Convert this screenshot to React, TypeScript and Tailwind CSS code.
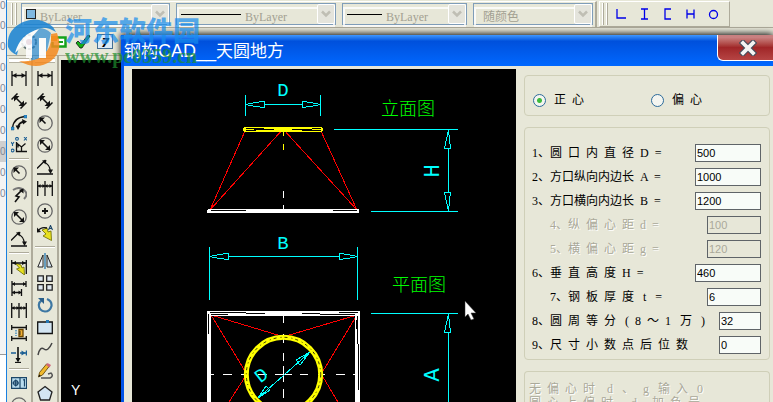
import type { ReactNode } from "react";

const ink = { fill: "none", stroke: "#111", strokeWidth: 1.3 };

const icons: Record<string, ReactNode> = {
  linear: (
    <g {...ink}>
      <path d="M1 0v15M15 0v15M1 4.500h14" />
      <path d="M1.500 4.500l4-2.500v5zM14.500 4.500l-4-2.500v5z" fill="#111" stroke="none" />
    </g>
  ),
  aligned: (
    <g {...ink}>
      <path d="M.500 6.500l6-6M9.500 15.500l6-6M3 3l10 10" strokeWidth="1.500" />
      <path d="M3 3h5.500L3 8.500zM13 13H7.500L13 7.500z" fill="#111" stroke="none" />
    </g>
  ),
  arc: (
    <g {...ink}>
      <path d="M1.500 13Q2.500 2.500 14 1.500" />
      <path d="M7 13Q7.500 7.500 13 6.500" strokeWidth="1.800" />
      <path d="M4.500 10.500h5l-2.500 4.500zM11 4l5 2.500l-4 3z" fill="#111" stroke="none" />
      <path d="M0 12h3v3H0zM13 0h3v3h-3z" fill="#2e8fd0" stroke="#145a8c" strokeWidth="0.500" />
    </g>
  ),
  ordinate: (
    <g {...ink}>
      <path d="M5.500 5v9.500H16M5.500 6l5 4 4-3.500M10.500 10v4.500M7 10.500v-3" />
      <g stroke="#1c5f94" strokeWidth="1.100">
        <path d="M0 5l1.500 2L3 5M1.500 7v2M13 0l3 3.500M16 0l-3 3.500" />
        <circle cx="6" cy="1.800" r="1.400" />
        <circle cx="1.600" cy="13.500" r="1.400" />
      </g>
    </g>
  ),
  radius: (
    <g {...ink}>
      <circle cx="8" cy="8" r="7.200" stroke="#666" />
      <path d="M3 3l5.500 5.500" strokeWidth="1.600" />
      <path d="M2.500 2.500h5.500L2.500 8z" fill="#111" stroke="none" />
    </g>
  ),
  jogged: (
    <g {...ink}>
      <path d="M2 3Q8-1 13 3t0 9" stroke="#777" strokeWidth="2" />
      <path d="M4 15l4-5-3-1 6-6" strokeWidth="1.600" />
      <path d="M12.500 1.500v5L8 3z" fill="#111" stroke="none" />
    </g>
  ),
  diameter: (
    <g {...ink}>
      <circle cx="8" cy="8" r="7.200" stroke="#666" />
      <path d="M3 3l10 10" strokeWidth="1.600" />
      <path d="M3 3h5L3 8zM13 13H8l5-5z" fill="#111" stroke="none" />
    </g>
  ),
  angular: (
    <g {...ink}>
      <path d="M0 15h16M0 9.500L8.500 1M6 2.500Q13 5 13.500 13" />
      <path d="M5 1.500l4.500-.500-1 4.500zM11 10.500h5L13.500 15z" fill="#111" stroke="none" />
    </g>
  ),
  quick: (
    <g {...ink}>
      <path d="M4 4l6 2 1 3 2-1 .500 8-8-6 3-1z" fill="#e8e020" stroke="#6a6a00" strokeWidth="0.800" />
      <path d="M.700 1v14M15.300 1v14M1 4h14" />
      <path d="M1 4l4-2v4zM15 4l-4-2v4z" fill="#111" stroke="none" />
    </g>
  ),
  baseline: (
    <g {...ink}>
      <path d="M1 0v15M15 0v6M10.500 8v7M1 3h14M1 11.500h9.500" />
      <path d="M1 3l3-2v4zM15 3l-3-2v4zM1 11.500l3-2v4zM10.500 11.500l-3-2v4z" fill="#111" stroke="none" />
    </g>
  ),
  chain: (
    <g {...ink}>
      <path d="M.700 0v15M8 0v15M15.300 0v15M1 5h14" />
      <path d="M1 5l2.500-2v4zM8 5L5.500 3v4zM8 5l2.500-2v4zM15 5l-2.500-2v4z" fill="#111" stroke="none" />
    </g>
  ),
  space: (
    <g {...ink}>
      <path d="M.700 0v5M15.300 0v5M.700 11v5M15.300 11v5M1 2.500h14M1 13.500h14" />
      <path d="M5 5v6" stroke="#2e7fb8" strokeDasharray="1.500 1" />
      <path d="M8 4.500h4v7H8z" fill="#f2b234" stroke="#6a4300" />
      <path d="M8 7h2M8 9h2" strokeWidth="0.800" />
    </g>
  ),
  breakDim: (
    <g {...ink}>
      <path d="M7 0v14" strokeWidth="1.600" />
      <path d="M4.500 11h5L7 15.500z" fill="#111" stroke="none" />
      <path d="M4 15.500h6" />
      <path d="M0 6h5M9 6h6M15.500 3.500v5" stroke="#1c5f94" strokeWidth="1.500" />
      <path d="M10.500 3.500L14.500 6l-4 2.500z" fill="#1c5f94" stroke="none" />
    </g>
  ),
  tolerance: (
    <g stroke="#1c4668" strokeWidth="1.200" fill="#b9dcee">
      <path d="M.600 2.600h15v10.800H.600zM9 2.600v10.800" />
      <circle cx="4.700" cy="8" r="2.300" fill="none" />
      <path d="M1.500 8H8M4.700 4.500v7M12 5l1.500-.500v7" />
    </g>
  ),
  center: (
    <g {...ink}>
      <circle cx="8" cy="8" r="7.200" stroke="#666" />
      <path d="M8 5v6M5 8h6" strokeWidth="1.800" />
    </g>
  ),
  edit: (
    <g {...ink}>
      <path d="M5 5l5-2 1 4 3-1 .500 9.500L6 11l3-2z" fill="#e8e020" stroke="#6a6a00" strokeWidth="0.800" />
      <path d="M1 6Q4 1.500 10 3" />
      <path d="M0 2.500V7.500l4-.500z" fill="#111" stroke="none" />
      <path d="M11.500 5l2-4.500 2 4.500M12 3.500h3" stroke="#1c4668" strokeWidth="1.100" />
    </g>
  ),
  mirror: (
    <g>
      <path d="M6 2v12H.800z" fill="#f3f7fa" stroke="#222" />
      <path d="M10 2v12h5.200z" fill="#cfe0ec" stroke="#222" />
      <path d="M8 0v16" stroke="#2477b3" strokeWidth="1.300" />
    </g>
  ),
  array: (
    <path d="M.800.800h5.500v5.500H.800zM9.700.800h5.500v5.500H9.700zM.800 9.700h5.500v5.500H.800zM9.700 9.700h5.500v5.500H9.700z" fill="#dfe9f1" stroke="#222" strokeWidth="1.300" />
  ),
  rotate: (
    <g fill="none" stroke="#3d77a3" strokeWidth="2.200">
      <path d="M10 2Q15 4 14.500 9Q13 14.500 8 14.500Q2 14 1.800 8Q2 5 4.500 3.500" />
      <path d="M1 1h6v6z" fill="#2a5f8a" stroke="none" />
    </g>
  ),
  rect: (
    <g>
      <path d="M.700 3h14.600v11.500H.700z" fill="#d3e5f2" stroke="#111" strokeWidth="1.300" />
      <path d="M9 1h3v3H9z" fill="#2477b3" />
    </g>
  ),
  spline: <path d="M1 14Q3 5 7 8T15 2" fill="none" stroke="#444" strokeWidth="1.500" />,
  pencil: (
    <g>
      <path d="M4 15h9q4-2 1-5l-3 1" fill="none" stroke="#555" strokeWidth="1.500" />
      <path d="M1.500 14l1-4.500 7-8.500 3 2-7 9z" fill="#f0b92c" stroke="#553b00" strokeWidth="0.800" />
      <path d="M9 2l1.500-2 3.500 2-1.500 2.500z" fill="#d0687a" />
      <path d="M1.500 14l.600-2.500 1.800 1.300z" fill="#111" />
    </g>
  ),
  polygon: <path d="M8 1.500l7 5.500-2.500 8h-9L1 7z" fill="#d3e5f2" stroke="#222" strokeWidth="1.300" />,
};

const dimensionTools = [
  "linear", "aligned", "arc", "ordinate", "-", "radius", "jogged", "diameter", "angular", "-",
  "quick", "baseline", "chain", "space", "breakDim", "-", "tolerance", "center",
];
const drawTools = [
  "linear", "aligned", "radius", "diameter", "angular", "chain", "center", "edit", "-",
  "mirror", "array", "rotate", "rect", "spline", "pencil", "polygon",
];

const fields = [
  { id: "D", label: "1、圆  口  内  直  径  D  =", value: "500", box: "w-[66px]" },
  { id: "A", label: "2、方口纵向内边长  A  =", value: "1000", box: "w-[66px]" },
  { id: "B", label: "3、方口横向内边长  B  =", value: "1200", box: "w-[66px]" },
  { id: "d", label: "4、纵  偏  心  距  d  =", value: "100", box: "w-[54px]", indent: true, disabled: true },
  { id: "g", label: "5、横  偏  心  距  g  =", value: "120", box: "w-[54px]", indent: true, disabled: true },
  { id: "H", label: "6、垂  直  高  度  H  =", value: "460", box: "w-[66px]" },
  { id: "t", label: "7、钢  板  厚  度   t   =", value: "6", box: "w-[54px]", indent: true },
  { id: "n", label: "8、圆  周  等  分   (  8  ～  1   万   )", value: "32", box: "w-[42px]" },
  { id: "p", label: "9、尺  寸  小  数  点  后  位  数", value: "0", box: "w-[42px]" },
];

function ToolColumn({ tools, name }: { tools: string[]; name: string }) {
  return (
    <div role="toolbar" aria-label={name} className="flex w-[26px] shrink-0 flex-col items-center border-r-2 border-r-[#aeab9b]">
      <div className="mt-0.5 mb-[5px] h-[5px] w-5 shrink-0 border-y border-[#b5b2a2] bg-white" />
      {tools.map((tool, i) =>
        tool === "-" ? (
          <div key={i} className="my-0.5 h-0.5 w-5 shrink-0 border-t border-t-[#aeab9b] border-b border-b-white" />
        ) : (
          <button key={i} type="button" aria-label={tool} className="flex h-[22px] w-[22px] shrink-0 items-center justify-center">
            <svg viewBox="0 0 16 16" className="h-4 w-4">{icons[tool]}</svg>
          </button>
        )
      )}
    </div>
  );
}

function Combo({ label, name, width, children, pad }: { label: string; name: string; width: string; children?: ReactNode; pad: string }) {
  return (
    <div className={`relative h-[22px] shrink-0 border border-[#7f9db9] bg-[#e7e7d8] ${width}`}>
      <select disabled aria-label={name} className={`h-full w-full appearance-none border-2 border-white/80 text-[12px] leading-4 text-[#a3a192] opacity-100 ${pad}`}>
        <option>{label}</option>
      </select>
      {children}
      <div className="pointer-events-none absolute top-0 right-0 flex h-5 w-[18px] items-center justify-center rounded-xs border border-white bg-[#e4e4dc]">
        <svg viewBox="0 0 10 8" className="h-2 w-2.5"><path d="M1 1.500l4 4 4-4" fill="none" stroke="#bfbeb4" strokeWidth="2.500" /></svg>
      </div>
    </div>
  );
}

function Grip() {
  return (
    <div className="flex h-[22px] shrink-0 gap-0.5">
      <div className="w-0.5 border-r border-r-[#aeab9b] bg-white" />
      <div className="w-0.5 border-r border-r-[#aeab9b] bg-white" />
    </div>
  );
}

function TopToolbars() {
  return (
    <div className="flex h-7 shrink-0 items-center overflow-hidden border-b border-b-[#aeab9b]">
      <div className="flex h-[26px] shrink-0 items-center border-t border-t-white border-r-2 border-r-[#aeab9b] pr-0.5 pl-1">
        <Grip />
        <div className="ml-1 flex items-center gap-1.5 font-['Liberation_Serif','Noto_Sans_CJK_SC',serif]">
          <Combo name="颜色" label="ByLayer" width="w-[149px]" pad="pl-4">
            <div className="absolute top-[5px] left-1 h-2.5 w-2.5 border border-[#222] bg-[#7fb8e0]" />
          </Combo>
          <Combo name="线型" label="ByLayer" width="w-[160px]" pad="pl-[66px]">
            <div className="absolute top-2.5 left-1 h-px w-[60px] bg-black" />
          </Combo>
          <Combo name="线宽" label="ByLayer" width="w-[125px]" pad="pl-[41px]">
            <div className="absolute top-2.5 left-1 h-px w-[35px] bg-black" />
          </Combo>
          <Combo name="打印样式" label="随颜色" width="w-[120px]" pad="pl-[7px]" />
        </div>
      </div>
      <div role="toolbar" aria-label="型钢" className="ml-0.5 flex h-[26px] shrink-0 items-center border border-[#aeab9b] border-t-white border-l-white pr-1 pl-0.5">
        <Grip />
        <div className="ml-0.5 flex">
          {["M3 2v9h9", "M4 2h7M7.500 2v10M4 12h7", "M11 2H5v10h6M5 5v4", "M4 2.500v9M11 2.500v9M4 7h7"].map((d) => (
            <button key={d} type="button" aria-label="截面" className="flex h-6 w-[23px] items-center justify-center">
              <svg viewBox="0 0 15 14" className="h-3.5 w-[15px]"><path d={d} fill="none" stroke="#0000e8" strokeWidth="1.300" /></svg>
            </button>
          ))}
          <button type="button" aria-label="圆管" className="flex h-6 w-[23px] items-center justify-center">
            <svg viewBox="0 0 15 14" className="h-3.5 w-[15px]"><circle cx="7.500" cy="7.500" r="4" fill="none" stroke="#0000e8" strokeWidth="1.300" /></svg>
          </button>
        </div>
      </div>
    </div>
  );
}

function StandardToolbar() {
  return (
    <div className="flex h-7 shrink-0 items-center border-b border-b-[#aeab9b] pl-3">
      <button type="button" aria-label="设置" className="h-5 w-6">
        <svg viewBox="0 0 20 20" className="h-5 w-5">
          <circle cx="10" cy="10" r="7" fill="#e8edf2" stroke="#677" strokeWidth="2" strokeDasharray="3 1.500" />
          <circle cx="10" cy="10" r="3" fill="#7b2d53" />
        </svg>
      </button>
      <button type="button" aria-label="图层" className="ml-2 h-4 w-4">
        <svg viewBox="0 0 16 16" className="h-4 w-4">
          <path d="M4 3.500h10.500v9H1.500V8" fill="#fff" stroke="#16a31b" strokeWidth="2.500" />
          <path d="M0 2h6v5H0z" fill="#e3a928" />
          <path d="M7 8h5" stroke="#16a31b" strokeWidth="2" />
        </svg>
      </button>
      <button type="button" aria-label="确定" className="ml-2 h-4 w-4">
        <svg viewBox="0 0 16 16" className="h-4 w-4"><path d="M1 9l2-2 3 3 7-9 2 1-8 12H5z" fill="#14b014" stroke="#111" strokeWidth="0.800" /></svg>
      </button>
      <button type="button" aria-label="日历" className="ml-1.5 flex h-[15px] w-4 items-center justify-center border border-[#456f94] bg-[#dceaf5] text-[13px] leading-3 font-bold text-black italic">
        7
      </button>
    </div>
  );
}

function Watermark() {
  return (
    <div className="pointer-events-none absolute top-[15px] left-[7px] flex">
      <svg viewBox="0 0 54 54" className="h-[54px] w-[54px] opacity-85">
        <path d="M1 32Q-1 15 16 7Q32 0 46 12L49 17Q36 9 27 16Q13 23 10 40Q4 38 1 32z" fill="#1782d3" />
        <path d="M24 15Q35 10 44 18L38 45Q30 49 24 44z" fill="#1782d3" fillOpacity="0.750" />
        <path d="M50 18Q57 36 44 46Q30 56 12 46Q30 48 38 38Q45 31 44 19z" fill="#f58a1f" />
        <path d="M8 38Q13 19 32 14l-7 8v21h-6V29Q14 32 8 38z" fill="#fff" />
        <path d="M32 23h7v20h-7z" fill="#fff" />
      </svg>
      <div className="pl-1 whitespace-nowrap opacity-70">
        <div className="font-['Noto_Sans_CJK_SC',sans-serif] text-[27px] leading-[30px] font-black text-[#178cec]">河东软件园</div>
        <div className="font-['Liberation_Serif',serif] text-[20px] leading-[22px] font-bold text-[#1e8f2e]">www.pc0359.cn</div>
      </div>
    </div>
  );
}

function Drawing() {
  return (
    <svg viewBox="132 69 384 333" className="h-[333px] w-[384px] shrink-0 bg-black" fill="none">
      <g stroke="#f00" shapeRendering="crispEdges">
        <path d="M245 131L210 210L283 129L357 210L321 131" />
        <path d="M211 315L281 336M211 315L245 371M245 377L229 402M357 315L286 336M357 315L323 371M323 377L338 402" />
      </g>

      <g shapeRendering="crispEdges">
        <path d="M244 127h78v5h-78zM243 128h80v3h-80z" fill="#ff0" />
        <path d="M246 128.500h18M254 129.500h20M246 130.500h10M292 129.500h20M302 130.500h19M312 128.500h9" stroke="#000" />
        <path d="M283.500 131v5M283.500 144v6" stroke="#ff0" />
        <path d="M283.500 191v7M283.500 205v5" stroke="#fff" />
        <path d="M208 209h151v4H207v-3z" fill="#fff" />
        <path d="M211 210.500h35M333 210.500h24" stroke="#000" />

        <path d="M207 402v-91h153v91h-5v-86H211v86z" fill="#fff" />
        <path d="M210 312.500h36M246 313.500h19M211 314.500h17M302 313.500h18M320 314.500h35M339 312.500h19M208.500 314v20M357.500 316v28M358.500 344v46M356.500 320v9" stroke="#000" />
        <path d="M283.500 316v7M283.500 334v9M283.500 353v8M283.500 366v16M283.500 389v9" stroke="#fff" />
        <path d="M211 374.500h3M223 374.500h9M241 374.500h6M258 374.500h9M275 374.500h17M300 374.500h8M318 374.500h7M336 374.500h9M353 374.500h3" stroke="#fff" />
      </g>

      <circle cx="283.500" cy="374.500" r="37.200" stroke="#ff0" strokeWidth="5" />
      <circle cx="283.500" cy="374.500" r="37.200" stroke="#000" strokeWidth="0.800" strokeDasharray="3 4 1 3" />

      <g stroke="#0ff" shapeRendering="crispEdges">
        <path d="M245.500 95v21M320.500 95v21M264 104.500h39M246 104.500l9-2 9-1v6l-9-1zM320 104.500l-9-2-9-1v6l9-1z" />
        <path d="M334 129.500h124M371 211.500h87M448.500 148v44M448.500 130l-2 9-2 9h6l-1-9zM448.500 211l-2-9-2-10h6l-1 9z" />
        <path d="M209.500 247v53M357.500 247v53M229 256.500h110M210 256.500l9-2 9-1v6l-9-1zM357 256.500l-9-2-9-1v6l9-1z" />
        <path d="M371 313.500h87M448.500 332v70M448.500 314l-2 9-2 9h6l-1-9z" />
        <path d="M258 398L310 352M310 352l-14 8 4 5zM258 398l8-12 4 4z" />
      </g>

      <g fill="#0ff" textAnchor="middle" className="font-['Liberation_Mono',monospace] text-[19px]">
        <text x="283" y="96">D</text>
        <text x="283" y="249">B</text>
        <text transform="translate(439 171) rotate(-90)" className="text-[22px]">H</text>
        <text transform="translate(439 375) rotate(-90)" className="text-[22px]">A</text>
        <text transform="translate(265 380) rotate(-38)">D</text>
      </g>
      <g fill="#0f0" className="font-['Noto_Sans_CJK_SC',sans-serif] text-[18px] font-light">
        <text x="381" y="115">立面图</text>
        <text x="392" y="291">平面图</text>
      </g>

      <path d="M465 301v16l3-3 3 6 3-1-3-6h5z" fill="#fff" stroke="#333" strokeWidth="0.500" />
    </svg>
  );
}

function ParameterPanel() {
  return (
    <form className="flex min-w-0 flex-1 flex-col gap-[11px] pt-1.5 pr-[3px] pl-2 font-['Liberation_Serif','Noto_Sans_CJK_SC',serif] text-[12px] leading-4 text-black">
      <fieldset className="flex shrink-0 rounded-sm border border-[#cfcfb8] pt-4 pb-[7px] pl-2">
        {["正  心", "偏  心"].map((text, i) => (
          <label key={text} className="flex w-[118px] items-center gap-2 whitespace-pre">
            <input
              type="radio"
              name="mode"
              defaultChecked={i === 0}
              className="h-[13px] w-[13px] appearance-none rounded-full border border-[#2b6a9a] bg-[#f4f5f0] checked:bg-[radial-gradient(circle,#3dbb3d_0_2px,#f4f5f0_3px)]"
            />
            {text}
          </label>
        ))}
      </fieldset>

      <fieldset className="shrink-0 rounded-sm border border-[#cfcfb8] pt-[13px] pr-2 pb-0.5 pl-[7px]">
        {fields.map((f) => (
          <div key={f.id} className="flex h-6 items-center justify-between">
            <label
              htmlFor={`field-${f.id}`}
              className={`whitespace-pre ${f.indent ? "pl-[18px]" : ""} ${f.disabled ? "text-[#aaa99a] [text-shadow:1px_1px_0_#fff]" : ""}`}
            >
              {f.label}
            </label>
            <input
              id={`field-${f.id}`}
              defaultValue={f.value}
              disabled={f.disabled}
              className={`h-[18px] border border-[#5f6468] bg-[#f8fcf8] pl-px font-['Liberation_Sans',sans-serif] text-[11px] leading-4 disabled:bg-[#e7e7d8] disabled:text-[#aaa99a] ${f.box}`}
            />
          </div>
        ))}
      </fieldset>

      <div className="flex-1 rounded-t-sm border border-b-0 border-[#cfcfb8] pt-2.5 pl-1 leading-3.5 whitespace-pre text-[#aaa99a] [text-shadow:1px_1px_0_#fff]">
        <p>无  偏  心  时    d   、   g   输  入   0</p>
        <p>圆  心  上  偏  时      d     加  负  号</p>
      </div>
    </form>
  );
}

function Dialog() {
  return (
    <section role="dialog" aria-labelledby="dialog-title" className="absolute top-[35px] right-0 bottom-0 left-[121px] flex flex-col overflow-hidden border-l-[3px] border-l-[#0054e8] bg-[#e7e7d8] shadow-[0_-1px_7px_#000]">
      <header className="flex h-[31px] shrink-0 items-start justify-between bg-linear-to-b from-[#3f97ff] from-0% via-[#0050dc] via-20% to-[#0068ff]">
        <h1 id="dialog-title" className="font-['Liberation_Sans','Noto_Sans_CJK_SC',sans-serif] text-[17px] leading-8 whitespace-nowrap text-white">
          钢构<span className="text-lg leading-8">CAD__</span>天圆地方
        </h1>
        <button type="button" aria-label="关闭" className="flex h-[26px] w-14 shrink-0 items-center justify-center rounded-bl-md border border-t-0 border-r-0 border-white bg-linear-to-b from-[#c98080] from-10% via-[#a02628] via-50% to-[#b64444] pl-1">
          <svg viewBox="0 0 18 16" className="h-4 w-[18px]">
            <path d="M4 3l10 10M14 3L4 13" stroke="#444c5c" strokeWidth="6" strokeLinecap="square" />
            <path d="M4 3l10 10M14 3L4 13" stroke="#f4f4f4" strokeWidth="3.800" strokeLinecap="square" />
          </svg>
        </button>
      </header>
      <div className="flex min-h-0 flex-1 pt-[3px] pl-2">
        <Drawing />
        <ParameterPanel />
      </div>
    </section>
  );
}

export default function App() {
  return (
    <div className="relative flex h-screen w-full overflow-hidden bg-[#e7e7d8]">
      <div className="w-1.5 shrink-0 bg-white font-['Liberation_Sans',sans-serif] text-[10px] leading-3 text-[#7f8794]">
        <div className="h-[355px] border-b border-b-[#999] bg-[#f4f4f4]">
          <div className="h-[15px]">0</div>
          {Array.from({ length: 9 }, (_, i) => (
            <div key={i} className={`flex h-[21px] items-center ${i === 6 ? "bg-[#cfcfcf]" : ""}`}>0</div>
          ))}
        </div>
      </div>
      <main className="flex min-w-0 flex-1 flex-col border-l border-l-[#1a80e0]">
        <TopToolbars />
        <StandardToolbar />
        <div className="flex min-h-0 flex-1">
          <ToolColumn name="标注" tools={dimensionTools} />
          <ToolColumn name="绘图" tools={drawTools} />
          <div className="mt-1 ml-0.5 flex flex-1 items-end bg-black pb-1 pl-2.5 font-['Liberation_Sans',sans-serif] text-[14px] leading-4 text-white">Y</div>
        </div>
      </main>
      <Dialog />
      <Watermark />
    </div>
  );
}
